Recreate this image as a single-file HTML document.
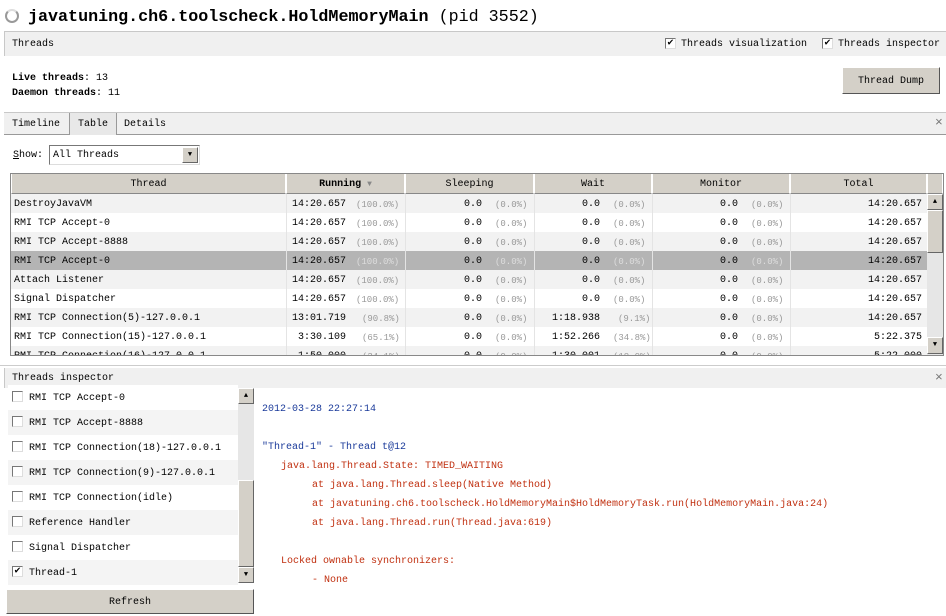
<!DOCTYPE html>
<html><head><meta charset="utf-8"><style>
*{margin:0;padding:0;box-sizing:border-box}
body{width:946px;height:616px;background:#fff;position:relative;overflow:hidden;font-family:"Liberation Mono","Noto Sans CJK SC",monospace;font-size:10px;color:#000}
.a{position:absolute;white-space:nowrap}
.t{margin-top:2px}
.cb{position:absolute;width:11px;height:11px;border:1px solid #777;border-right-color:#ddd;border-bottom-color:#ddd;background:#fff;font-size:10px;line-height:9px;text-align:center}
.row{position:absolute;left:11px;width:916px;height:19px;line-height:22px}
.row span{position:absolute;top:0}
.p{color:#999;font-size:9px}
.r{text-align:right}
.hd{position:absolute;top:174px;height:20px;line-height:21px;background:#d4d0c8;border-right:1px solid #fff;border-bottom:1px solid #888;text-align:center;border-left:1px solid #fff}
.li{position:absolute;left:8px;width:230px;height:25px;line-height:27px}
.red{color:#c03010}
</style></head><body>
<div class="a" style="left:5px;top:9px;width:14px;height:14px;border:2px solid #999;border-radius:50%;border-top-color:#ddd"></div>
<div class="a" style="left:28px;top:8px;font-size:16.7px;font-weight:bold">javatuning.ch6.toolscheck.HoldMemoryMain <span style="font-weight:normal">(pid 3552)</span></div>
<div class="a" style="left:4px;top:31px;width:942px;height:25px;background:#f0f0f0;border-top:1px solid #c8c8c8;border-left:1px solid #c8c8c8"></div>
<div class="a" style="left:12px;top:39px">Threads</div>
<div class="cb" style="left:665px;top:38px">✔</div><div class="a" style="left:681px;top:39px">Threads visualization</div>
<div class="cb" style="left:822px;top:38px">✔</div><div class="a" style="left:838px;top:39px">Threads inspector</div>
<div class="a" style="left:12px;top:73px"><b>Live threads</b>: 13</div>
<div class="a" style="left:12px;top:88px"><b>Daemon threads</b>: 11</div>
<div class="a" style="left:842px;top:67px;width:98px;height:27px;background:#d4d0c8;border:1px solid #fff;border-right-color:#555;border-bottom-color:#555;text-align:center;line-height:27px">Thread Dump</div>
<div class="a" style="left:4px;top:112px;width:942px;height:23px;background:#f0f0f0;border-top:1px solid #c8c8c8;border-bottom:1px solid #999"></div>
<div class="a" style="left:12px;top:119px">Timeline</div>
<div class="a" style="left:69px;top:113px;width:48px;height:22px;background:#e8e8e8;border-left:1px solid #999;border-right:1px solid #999;text-align:center;line-height:23px">Table</div>
<div class="a" style="left:124px;top:119px">Details</div>
<div class="a" style="left:935px;top:115px;font-size:13px;color:#777">×</div>
<div class="a" style="left:13px;top:150px"><u>S</u>how:</div>
<div class="a" style="left:49px;top:145px;width:151px;height:20px;border:1px solid #777;border-right-color:#ddd;border-bottom-color:#ddd;background:#fff;line-height:20px;padding-left:3px">All Threads</div>
<div class="a" style="left:182px;top:147px;width:16px;height:16px;background:#d4d0c8;border:1px solid #fff;border-right-color:#666;border-bottom-color:#666;font-size:7px;text-align:center;line-height:14px">▼</div>
<div class="a" style="left:10px;top:173px;width:934px;height:183px;border:1px solid #888;background:#fff"></div>
<div class="hd" style="left:11px;width:275px">Thread</div>
<div class="hd" style="left:286px;width:119px"><b>Running</b> <span style="color:#888;font-size:8px">▼</span></div>
<div class="hd" style="left:405px;width:129px">Sleeping</div>
<div class="hd" style="left:534px;width:118px">Wait</div>
<div class="hd" style="left:652px;width:138px">Monitor</div>
<div class="hd" style="left:790px;width:137px">Total</div>
<div class="hd" style="left:927px;width:16px"></div>

<div class="a" style="left:11px;top:194px;width:916px;height:161px;overflow:hidden">
<div style="position:relative;left:-11px;top:-194px">
<div class="row" style="top:194px;background:#f2f2f2"><span style="left:3px">DestroyJavaVM</span><span class="r" style="right:581px">14:20.657</span><span class="p" style="left:345px">(100.0%)</span><span class="r" style="right:445px">0.0</span><span class="p" style="left:484px">(0.0%)</span><span class="r" style="right:327px">0.0</span><span class="p" style="left:602px">(0.0%)</span><span class="r" style="right:189px">0.0</span><span class="p" style="left:740px">(0.0%)</span><span class="r" style="right:5px">14:20.657</span></div>
<div class="row" style="top:213px;background:#fff"><span style="left:3px">RMI TCP Accept-0</span><span class="r" style="right:581px">14:20.657</span><span class="p" style="left:345px">(100.0%)</span><span class="r" style="right:445px">0.0</span><span class="p" style="left:484px">(0.0%)</span><span class="r" style="right:327px">0.0</span><span class="p" style="left:602px">(0.0%)</span><span class="r" style="right:189px">0.0</span><span class="p" style="left:740px">(0.0%)</span><span class="r" style="right:5px">14:20.657</span></div>
<div class="row" style="top:232px;background:#f2f2f2"><span style="left:3px">RMI TCP Accept-8888</span><span class="r" style="right:581px">14:20.657</span><span class="p" style="left:345px">(100.0%)</span><span class="r" style="right:445px">0.0</span><span class="p" style="left:484px">(0.0%)</span><span class="r" style="right:327px">0.0</span><span class="p" style="left:602px">(0.0%)</span><span class="r" style="right:189px">0.0</span><span class="p" style="left:740px">(0.0%)</span><span class="r" style="right:5px">14:20.657</span></div>
<div class="row" style="top:251px;background:#b4b4b4"><span style="left:3px">RMI TCP Accept-0</span><span class="r" style="right:581px">14:20.657</span><span class="p" style="left:345px;color:#ddd">(100.0%)</span><span class="r" style="right:445px">0.0</span><span class="p" style="left:484px;color:#ddd">(0.0%)</span><span class="r" style="right:327px">0.0</span><span class="p" style="left:602px;color:#ddd">(0.0%)</span><span class="r" style="right:189px">0.0</span><span class="p" style="left:740px;color:#ddd">(0.0%)</span><span class="r" style="right:5px">14:20.657</span></div>
<div class="row" style="top:270px;background:#f2f2f2"><span style="left:3px">Attach Listener</span><span class="r" style="right:581px">14:20.657</span><span class="p" style="left:345px">(100.0%)</span><span class="r" style="right:445px">0.0</span><span class="p" style="left:484px">(0.0%)</span><span class="r" style="right:327px">0.0</span><span class="p" style="left:602px">(0.0%)</span><span class="r" style="right:189px">0.0</span><span class="p" style="left:740px">(0.0%)</span><span class="r" style="right:5px">14:20.657</span></div>
<div class="row" style="top:289px;background:#fff"><span style="left:3px">Signal Dispatcher</span><span class="r" style="right:581px">14:20.657</span><span class="p" style="left:345px">(100.0%)</span><span class="r" style="right:445px">0.0</span><span class="p" style="left:484px">(0.0%)</span><span class="r" style="right:327px">0.0</span><span class="p" style="left:602px">(0.0%)</span><span class="r" style="right:189px">0.0</span><span class="p" style="left:740px">(0.0%)</span><span class="r" style="right:5px">14:20.657</span></div>
<div class="row" style="top:308px;background:#f2f2f2"><span style="left:3px">RMI TCP Connection(5)-127.0.0.1</span><span class="r" style="right:581px">13:01.719</span><span class="p" style="left:351px">(90.8%)</span><span class="r" style="right:445px">0.0</span><span class="p" style="left:484px">(0.0%)</span><span class="r" style="right:327px">1:18.938</span><span class="p" style="left:607px">(9.1%)</span><span class="r" style="right:189px">0.0</span><span class="p" style="left:740px">(0.0%)</span><span class="r" style="right:5px">14:20.657</span></div>
<div class="row" style="top:327px;background:#fff"><span style="left:3px">RMI TCP Connection(15)-127.0.0.1</span><span class="r" style="right:581px">3:30.109</span><span class="p" style="left:351px">(65.1%)</span><span class="r" style="right:445px">0.0</span><span class="p" style="left:484px">(0.0%)</span><span class="r" style="right:327px">1:52.266</span><span class="p" style="left:602px">(34.8%)</span><span class="r" style="right:189px">0.0</span><span class="p" style="left:740px">(0.0%)</span><span class="r" style="right:5px">5:22.375</span></div>
<div class="row" style="top:346px;background:#f2f2f2"><span style="left:3px">RMI TCP Connection(16)-127.0.0.1</span><span class="r" style="right:581px">1:50.000</span><span class="p" style="left:351px">(34.1%)</span><span class="r" style="right:445px">0.0</span><span class="p" style="left:484px">(0.0%)</span><span class="r" style="right:327px">1:30.001</span><span class="p" style="left:602px">(18.0%)</span><span class="r" style="right:189px">0.0</span><span class="p" style="left:740px">(0.0%)</span><span class="r" style="right:5px">5:22.000</span></div>
</div></div>
<div class="a" style="left:286px;top:194px;width:1px;height:161px;background:#e4e4e4"></div>
<div class="a" style="left:405px;top:194px;width:1px;height:161px;background:#e4e4e4"></div>
<div class="a" style="left:534px;top:194px;width:1px;height:161px;background:#e4e4e4"></div>
<div class="a" style="left:652px;top:194px;width:1px;height:161px;background:#e4e4e4"></div>
<div class="a" style="left:790px;top:194px;width:1px;height:161px;background:#e4e4e4"></div>
<div class="a" style="left:927px;top:194px;width:16px;height:161px;background:#e6e6e6"></div>
<div class="a" style="left:927px;top:194px;width:16px;height:16px;background:#d4d0c8;border:1px solid #fff;border-right-color:#666;border-bottom-color:#666;font-size:7px;text-align:center;line-height:14px">▲</div>
<div class="a" style="left:927px;top:210px;width:16px;height:43px;background:#d4d0c8;border:1px solid #fff;border-right-color:#666;border-bottom-color:#666"></div>
<div class="a" style="left:927px;top:337px;width:16px;height:17px;background:#d4d0c8;border:1px solid #fff;border-right-color:#666;border-bottom-color:#666;font-size:7px;text-align:center;line-height:15px">▼</div>
<div class="a" style="left:0;top:365px;width:946px;height:1px;background:#ccc"></div>
<div class="a" style="left:4px;top:368px;width:942px;height:20px;background:#f0f0f0;border-left:1px solid #c8c8c8"></div>
<div class="a" style="left:12px;top:373px">Threads inspector</div>
<div class="a" style="left:935px;top:370px;font-size:13px;color:#777">×</div>
<div class="li" style="top:385px;background:#fff"><div class="cb" style="left:4px;top:6px"></div><span class="a" style="left:21px">RMI TCP Accept-0</span></div>
<div class="li" style="top:410px;background:#f4f4f4"><div class="cb" style="left:4px;top:6px"></div><span class="a" style="left:21px">RMI TCP Accept-8888</span></div>
<div class="li" style="top:435px;background:#fff"><div class="cb" style="left:4px;top:6px"></div><span class="a" style="left:21px">RMI TCP Connection(18)-127.0.0.1</span></div>
<div class="li" style="top:460px;background:#f4f4f4"><div class="cb" style="left:4px;top:6px"></div><span class="a" style="left:21px">RMI TCP Connection(9)-127.0.0.1</span></div>
<div class="li" style="top:485px;background:#fff"><div class="cb" style="left:4px;top:6px"></div><span class="a" style="left:21px">RMI TCP Connection(idle)</span></div>
<div class="li" style="top:510px;background:#f4f4f4"><div class="cb" style="left:4px;top:6px"></div><span class="a" style="left:21px">Reference Handler</span></div>
<div class="li" style="top:535px;background:#fff"><div class="cb" style="left:4px;top:6px"></div><span class="a" style="left:21px">Signal Dispatcher</span></div>
<div class="li" style="top:560px;background:#f4f4f4"><div class="cb" style="left:4px;top:6px">✔</div><span class="a" style="left:21px">Thread-1</span></div>
<div class="a" style="left:238px;top:388px;width:16px;height:195px;background:#e6e6e6"></div>
<div class="a" style="left:238px;top:388px;width:16px;height:16px;background:#d4d0c8;border:1px solid #fff;border-right-color:#666;border-bottom-color:#666;font-size:7px;text-align:center;line-height:14px">▲</div>
<div class="a" style="left:238px;top:480px;width:16px;height:87px;background:#d4d0c8;border:1px solid #fff;border-right-color:#666;border-bottom-color:#666"></div>
<div class="a" style="left:238px;top:567px;width:16px;height:16px;background:#d4d0c8;border:1px solid #fff;border-right-color:#666;border-bottom-color:#666;font-size:7px;text-align:center;line-height:14px">▼</div>
<div class="a" style="left:6px;top:589px;width:248px;height:25px;background:#d4d0c8;border:1px solid #fff;border-right-color:#555;border-bottom-color:#555;text-align:center;line-height:25px">Refresh</div>
<div class="a" style="left:262px;top:404px;color:#1a3a9a">2012-03-28 22:27:14</div>
<div class="a" style="left:262px;top:442px;color:#1a3a9a">"Thread-1" - Thread t@12</div>
<div class="a red" style="left:281px;top:461px">java.lang.Thread.State: TIMED_WAITING</div>
<div class="a red" style="left:312px;top:480px">at java.lang.Thread.sleep(Native Method)</div>
<div class="a red" style="left:312px;top:499px">at javatuning.ch6.toolscheck.HoldMemoryMain$HoldMemoryTask.run(HoldMemoryMain.java:24)</div>
<div class="a red" style="left:312px;top:518px">at java.lang.Thread.run(Thread.java:619)</div>
<div class="a red" style="left:281px;top:556px">Locked ownable synchronizers:</div>
<div class="a red" style="left:312px;top:575px">- None</div>
</body></html>
